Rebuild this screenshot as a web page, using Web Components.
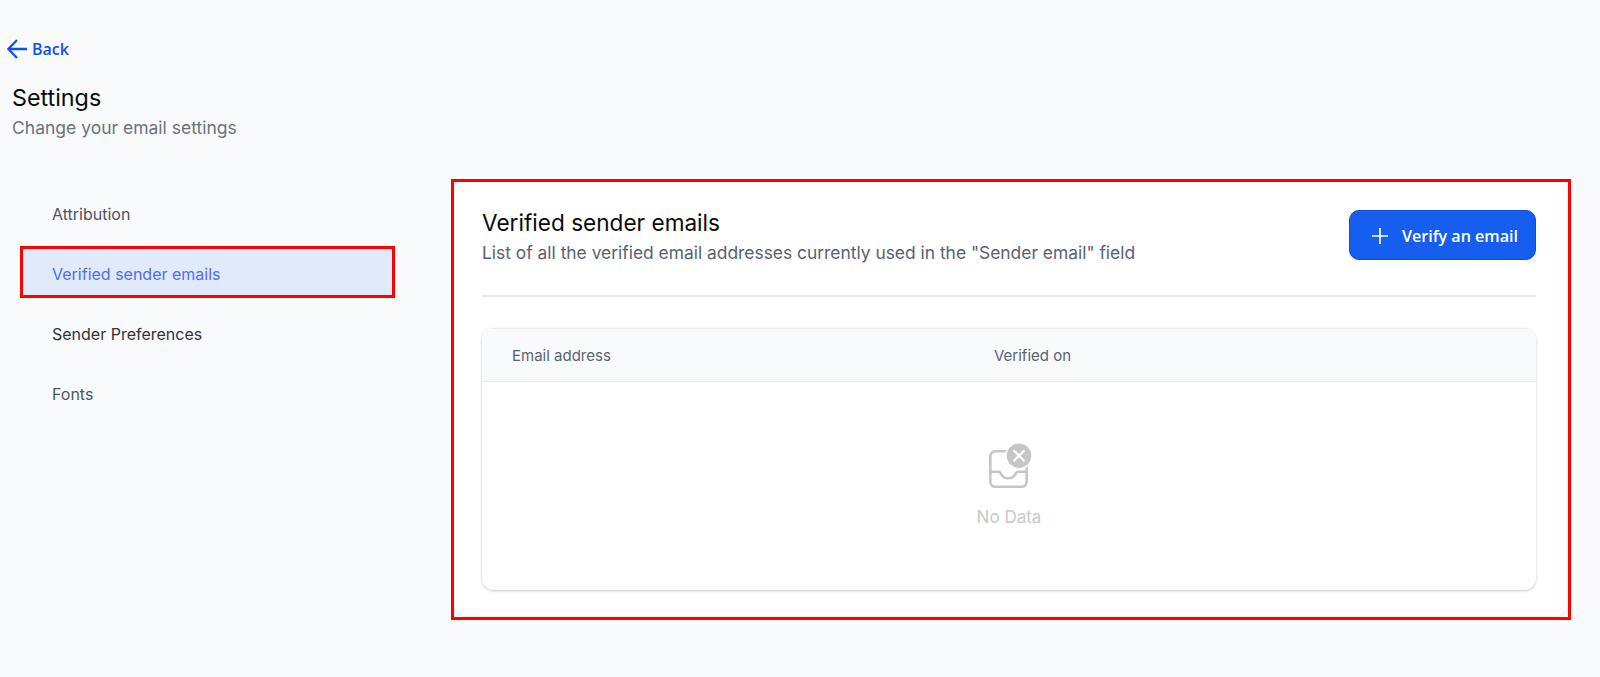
<!DOCTYPE html>
<html>
<head>
<meta charset="utf-8">
<title>Settings</title>
<style>
    html, body { margin: 0; height: 100%; background: #f9fafc; }
    body { font-family: Inter, "Liberation Sans", sans-serif; overflow: hidden; }
</style>
</head>
<body>
<settings-page>
    <back-link slot="back">Back</back-link>
    <page-title slot="title" sub="Change your email settings">Settings</page-title>
    <settings-nav slot="nav">
        <nav-item tone="muted">Attribution</nav-item>
        <nav-item active>Verified sender emails</nav-item>
        <nav-item>Sender Preferences</nav-item>
        <nav-item tone="muted">Fonts</nav-item>
    </settings-nav>
    <sender-card slot="main"></sender-card>
</settings-page>

<script>
class SettingsPage extends HTMLElement {
    constructor() {
        super();
        this.attachShadow({ mode: 'open' });
        this.shadowRoot.innerHTML = `
            <style>
                :host { display: block; height: 677px; box-sizing: border-box; padding-top: 38px; }
                .head { padding-left: 7px; }
                .body { display: flex; align-items: flex-start; margin-top: 42px; }
                .side { width: 454px; flex: none; box-sizing: border-box; padding: 6px 0 0 20px; }
                .main { width: 1114px; flex: none; }
            </style>
            <div class="head">
                <slot name="back"></slot>
                <slot name="title"></slot>
            </div>
            <div class="body">
                <div class="side"><slot name="nav"></slot></div>
                <div class="main"><slot name="main"></slot></div>
            </div>
        `;
    }
}

class BackLink extends HTMLElement {
    constructor() {
        super();
        this.attachShadow({ mode: 'open' });
        this.shadowRoot.innerHTML = `
            <style>
                :host {
                    display: flex; align-items: center; gap: 5px; height: 22px;
                    color: #1050f0; font: 600 16px "Open Sans", sans-serif;
                }
                svg { width: 20px; height: 20px; display: block; }
            </style>
            <svg viewBox="0 0 20 20" fill="none" stroke="#1050f0" stroke-width="2.300">
                <path d="M20 10H1.800M10 1 1.400 10l8.600 9"/>
            </svg>
            <slot></slot>
        `;
    }
}

class PageTitle extends HTMLElement {
    constructor() {
        super();
        this.attachShadow({ mode: 'open' });
        this.shadowRoot.innerHTML = `
            <style>
                :host { display: block; padding: 24px 0 0 5px; }
                h1 { margin: 0; font: 400 23.300px/28px Inter, sans-serif; color: #0a0a0a; }
                p { margin: 3px 0 0; font: 400 17.500px/25px Inter, sans-serif; color: #6b7280; }
            </style>
            <h1><slot></slot></h1>
            <p></p>
        `;
        this.shadowRoot.querySelector('p').textContent = this.getAttribute('sub');
    }
}

class SettingsNav extends HTMLElement {
    constructor() {
        super();
        this.attachShadow({ mode: 'open' });
        this.shadowRoot.innerHTML = `
            <style>
                :host { display: flex; flex-direction: column; gap: 8px; width: 375px; }
            </style>
            <slot></slot>
        `;
    }
}

class NavItem extends HTMLElement {
    constructor() {
        super();
        this.attachShadow({ mode: 'open' });
        this.shadowRoot.innerHTML = `
            <style>
                :host {
                    display: flex; align-items: center; height: 52px; box-sizing: border-box;
                    padding-left: 32px; font: 400 16px Inter, sans-serif; color: #333338;
                }
                :host([tone="muted"]) { color: #4b5563; }
                :host([active]) {
                    color: #4f6ef0; background: #e1eafa;
                    outline: 3px solid #ff0000; outline-offset: -3px;
                    margin: -2px 0 2px; padding-top: 3px;
                }
            </style>
            <slot></slot>
        `;
    }
}

class SenderCard extends HTMLElement {
    constructor() {
        super();
        this.attachShadow({ mode: 'open' });
        this.shadowRoot.innerHTML = `
            <style>
                :host { display: block; outline: 3px solid #ff0000; }
                .panel {
                    box-sizing: border-box; height: 435px; padding: 28px 32px 0 28px;
                    background: #fff; border-radius: 10px;
                    box-shadow: inset 0 -1px 2px rgba(30, 35, 60, .12);
                }
                .top { display: flex; justify-content: space-between; align-items: flex-start; }
                h2 { margin: 0; font: 400 22.600px/26px Inter, sans-serif; color: #0a0a0a; }
                p { margin: 5px 0 0; font: 400 17.400px/24px Inter, sans-serif; color: #596273; }
                hr { border: 0; height: 2px; background: #e8e9ee; margin: 30px 0 31px; }
            </style>
            <div class="panel">
                <div class="top">
                    <div>
                        <h2>Verified sender emails</h2>
                        <p>List of all the verified email addresses currently used in the "Sender email" field</p>
                    </div>
                    <primary-button>Verify an email</primary-button>
                </div>
                <hr>
                <sender-table></sender-table>
            </div>
        `;
    }
}

class PrimaryButton extends HTMLElement {
    constructor() {
        super();
        this.attachShadow({ mode: 'open' });
        this.shadowRoot.innerHTML = `
            <style>
                :host {
                    display: flex; align-items: center; gap: 13px; height: 50px; width: 187px;
                    box-sizing: border-box; padding: 2px 0 0 21px; border-radius: 10px;
                    background: #155eef; border: 1px solid #0b4fd8; color: #fff;
                    font: 600 16.100px "Open Sans", sans-serif;
                }
                svg { width: 18px; height: 18px; display: block; flex: none; }
            </style>
            <svg viewBox="0 0 18 18" fill="none" stroke="#fff" stroke-width="1.700">
                <path d="M9 1v16M1 9h16"/>
            </svg>
            <slot></slot>
        `;
    }
}

class SenderTable extends HTMLElement {
    constructor() {
        super();
        this.attachShadow({ mode: 'open' });
        this.shadowRoot.innerHTML = `
            <style>
                :host {
                    display: block; height: 262px; border-radius: 12px; overflow: hidden;
                    background: #fff; box-shadow: 0 1px 3px rgba(30, 35, 60, .25);
                }
                .row {
                    display: grid; grid-template-columns: 482px 1fr; align-items: center;
                    height: 54px; box-sizing: border-box; padding-left: 30px;
                    background: #f9fafc; border-bottom: 1px solid #e8e9ee;
                    border-top: 1px solid #ecedf1;
                    font: 400 15px Inter, sans-serif; color: #596273;
                }
            </style>
            <div class="row"><span>Email address</span><span>Verified on</span></div>
            <empty-state>No Data</empty-state>
        `;
    }
}

class EmptyState extends HTMLElement {
    constructor() {
        super();
        this.attachShadow({ mode: 'open' });
        this.shadowRoot.innerHTML = `
            <style>
                :host {
                    display: flex; flex-direction: column; align-items: center;
                    padding-top: 59px; font: 400 17px/24px Inter, sans-serif; color: #c9c9c9;
                }
                svg { width: 56px; height: 54px; display: block; margin-bottom: 10px; }
            </style>
            <svg viewBox="0 0 56 54" fill="none">
                <path d="M32 10.300H14.300a5 5 0 0 0-5 5v25.400a5 5 0 0 0 5 5h26.400a5 5 0 0 0 5-5V22" stroke="#c6c6c6" stroke-width="2.600"/>
                <path d="M9.300 30.700H17c1.800 0 2.500 1 3.200 2.500 1.300 2.800 3.700 4 7 4s5.700-1.200 7-4c.700-1.500 1.400-2.500 3.200-2.500h8.300" stroke="#c6c6c6" stroke-width="2.600"/>
                <circle cx="38" cy="14.700" r="13" fill="#c6c6c6" stroke="#fff" stroke-width="1.500"/>
                <path d="M32.500 9.200l11 11M43.500 9.200l-11 11" stroke="#fff" stroke-width="2.200"/>
            </svg>
            <slot></slot>
        `;
    }
}

customElements.define('settings-page', SettingsPage);
customElements.define('back-link', BackLink);
customElements.define('page-title', PageTitle);
customElements.define('settings-nav', SettingsNav);
customElements.define('nav-item', NavItem);
customElements.define('sender-card', SenderCard);
customElements.define('primary-button', PrimaryButton);
customElements.define('sender-table', SenderTable);
customElements.define('empty-state', EmptyState);
</script>
</body>
</html>
